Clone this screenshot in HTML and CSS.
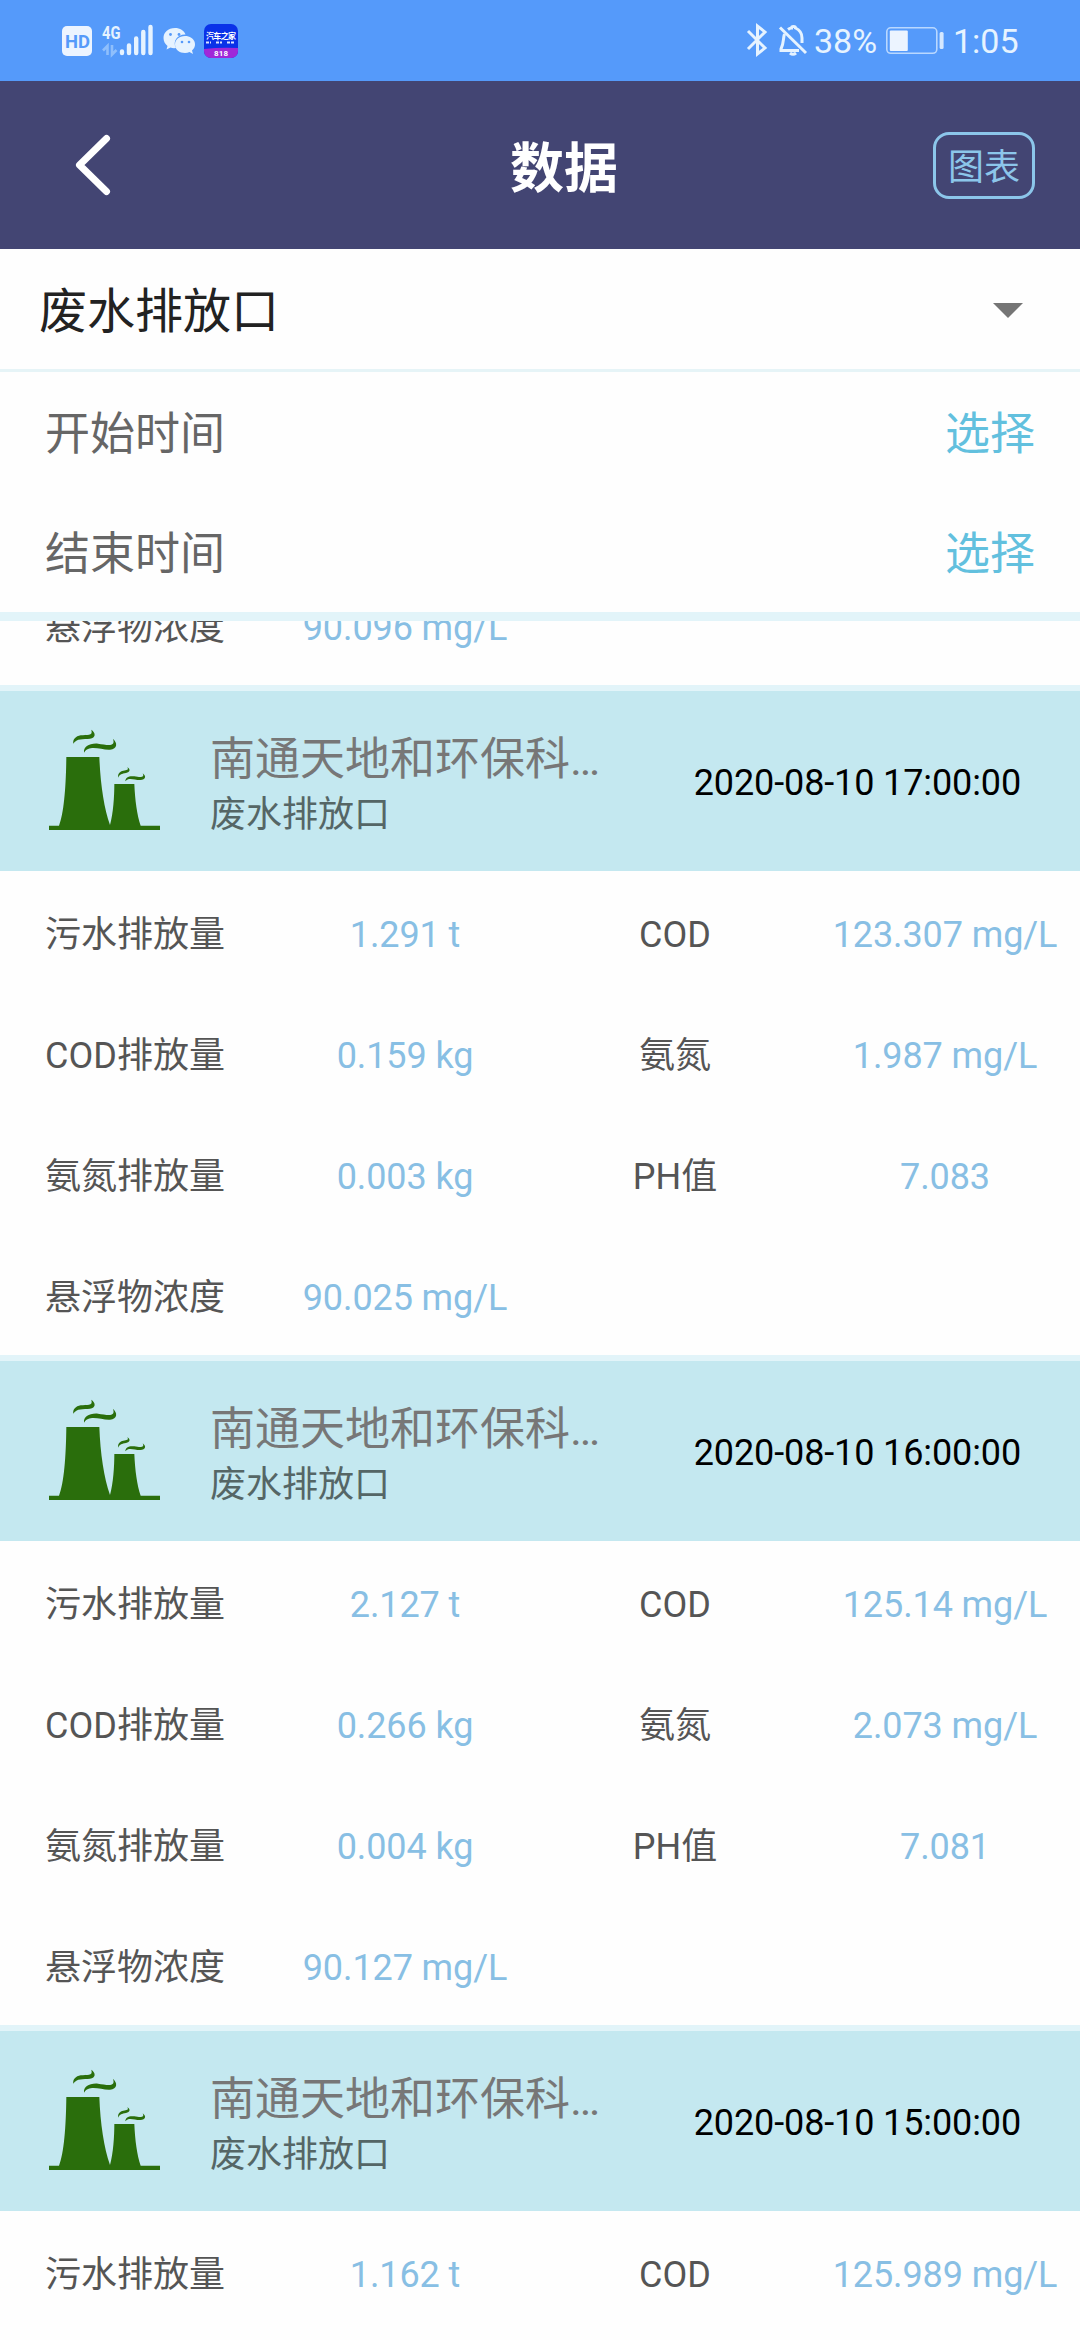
FILE: index.html
```html
<!DOCTYPE html>
<html lang="zh-CN">
<head>
<meta charset="utf-8">
<title>数据</title>
<link rel="stylesheet" href="styles.css">
</head>
<body>
<svg width="0" height="0" class="defs">
  <symbol id="plant" viewBox="54 144 339 309">
    <path fill="#2a6e0c" d="M57 437H87C102 400 108 320 109 231H208C211 310 222 385 240 435C250 400 253 350 253 312H313C315 360 321 405 332 437H390V450H57Z"/>
    <g fill="#2a6e0c">
      <path d="M130 191C128 178 137 169 152 166C170 163 190 170 184 149C198 159 198 173 180 176C160 178 140 174 130 191Z"/>
      <path d="M162 218C160 200 178 189 204 191C230 194 258 203 249 176C263 189 263 206 240 209C215 211 178 192 162 218Z"/>
      <path d="M265 293C262 281 270 274 280 272C290 270 297 271 292 261C302 268 301 276 288 279C276 281 268 283 265 293Z"/>
      <path d="M286 304C286 292 297 287 313 289C330 292 345 294 338 280C350 289 347 299 331 300C315 301 296 290 286 304Z"/>
    </g>
  </symbol>
</svg>
<div class="screen">
  <div class="status">
    <svg class="status-left" width="180" height="40" viewBox="60 21 180 40">
      <rect x="62" y="26" width="30" height="30" rx="5" fill="#ecf4ff"/>
      <text x="65" y="47.5" class="hd" textLength="25" lengthAdjust="spacingAndGlyphs">HD</text>
      <text x="102" y="39" class="net" textLength="18.500" lengthAdjust="spacingAndGlyphs">4G</text>
      <path d="M103 50.500L107.500 46V55M116.500 50L112 54.500V45" fill="none" stroke="#8fbffc" stroke-width="2.600"/>
      <g stroke="#e6f3ff" stroke-width="4.400" stroke-linecap="round">
        <path d="M122 51.500V53M129 45.500V53M136.200 38.500V53M143.300 32V53M150.500 27V53"/>
      </g>
      <g fill="#e6f3ff">
        <path d="M175 28C168 28 163.500 32.500 163.500 38C163.500 41 165 44 167.500 46L166.500 49.500L170.500 47.500Q173 48.500 176 48C172 41 178 34 185.500 34.500C184 30.500 180 28 175 28Z"/>
        <path d="M185 36C179 36 175 40 175 44.500C175 49.500 179.500 53 185 53Q187.500 53 189.500 52L193 54L192 50.500C198 46 195 36 185 36Z"/>
      </g>
      <g fill="#559afa"><circle cx="170.500" cy="34.500" r="1.400"/><circle cx="179" cy="34.500" r="1.400"/><circle cx="182" cy="42" r="1.300"/><circle cx="189" cy="42" r="1.300"/></g>
      <rect x="204" y="24" width="34" height="34" rx="7" fill="#0a32e8"/>
      <path d="M204 49Q221 47 238 48V51A7 7 0 0 1 231 58H211A7 7 0 0 1 204 51Z" fill="#a028d8"/>
      <text x="206" y="39" class="app-name" textLength="30">汽车之家</text>
      <path d="M206 42.500H211M216 42.500H222M227 42.500H234" stroke="#dce6ff" stroke-width="2" stroke-dasharray="3 1"/>
      <text x="214" y="56" class="app-num" textLength="14">818</text>
    </svg>
    <div class="status-right">
      <svg width="64" height="40" viewBox="745 21 64 40" fill="none" stroke="#e6f3ff" stroke-width="3">
        <path d="M748 31L765 48L757.500 54V26L765 32L748 49"/>
        <path d="M780 27.500L806 53" />
        <path d="M784.500 34C783 38 784 43 781 49V50.500H799M788 29.500Q790 28 791.500 28Q791.500 26.500 793.500 26.500Q795.500 26.500 795.500 28C800 30 802 33 802 38V43"/>
        <path d="M790 53Q793 55.500 796 53" />
      </svg>
      <span class="pct">38%</span>
      <svg class="battery" width="60" height="40" viewBox="885 21 60 40">
        <rect x="886.800" y="27.800" width="50" height="25.500" rx="4" fill="none" stroke="#b9d8ff" stroke-width="1.600"/>
        <rect x="889.800" y="30.500" width="18" height="20.500" rx="1" fill="#ecf4ff"/>
        <rect x="939.600" y="32" width="4" height="17" rx="1.500" fill="#d5e8ff"/>
      </svg>
      <span class="clock">1:05</span>
    </div>
  </div>

  <div class="header">
    <div class="back"><svg width="36" height="64" viewBox="0 0 36 64"><path d="M31.500 5.500L4.500 32L31.500 58.500" fill="none" stroke="#fff" stroke-width="7" stroke-linecap="round" stroke-linejoin="round"/></svg></div>
    <div class="title">数据</div>
    <div class="chart-btn">图表</div>
  </div>

  <div class="select"><span class="select-text">废水排放口</span><svg class="caret" width="30" height="15" viewBox="0 0 30 15"><path d="M0 0H30L15 15Z" fill="#757575"/></svg></div>
  <div class="pick"><span>开始时间</span><span class="pick-action">选择</span></div>
  <div class="pick"><span>结束时间</span><span class="pick-action">选择</span></div>

  <div class="list">
    <div class="grid scrolled">
      <div class="label">悬浮物浓度</div><div class="value">90.096 mg/L</div>
    </div>

    <div class="record">
      <svg class="plant" width="113" height="103"><use href="#plant"/></svg>
      <div class="info"><div class="company">南通天地和环保科…</div><div class="outlet">废水排放口</div></div>
      <div class="time">2020-08-10 17:00:00</div>
    </div>
    <div class="grid">
      <div class="label">污水排放量</div><div class="value">1.291 t</div><div class="label">COD</div><div class="value">123.307 mg/L</div>
      <div class="label">COD排放量</div><div class="value">0.159 kg</div><div class="label">氨氮</div><div class="value">1.987 mg/L</div>
      <div class="label">氨氮排放量</div><div class="value">0.003 kg</div><div class="label">PH值</div><div class="value">7.083</div>
      <div class="label">悬浮物浓度</div><div class="value">90.025 mg/L</div>
    </div>

    <div class="record">
      <svg class="plant" width="113" height="103"><use href="#plant"/></svg>
      <div class="info"><div class="company">南通天地和环保科…</div><div class="outlet">废水排放口</div></div>
      <div class="time">2020-08-10 16:00:00</div>
    </div>
    <div class="grid">
      <div class="label">污水排放量</div><div class="value">2.127 t</div><div class="label">COD</div><div class="value">125.14 mg/L</div>
      <div class="label">COD排放量</div><div class="value">0.266 kg</div><div class="label">氨氮</div><div class="value">2.073 mg/L</div>
      <div class="label">氨氮排放量</div><div class="value">0.004 kg</div><div class="label">PH值</div><div class="value">7.081</div>
      <div class="label">悬浮物浓度</div><div class="value">90.127 mg/L</div>
    </div>

    <div class="record">
      <svg class="plant" width="113" height="103"><use href="#plant"/></svg>
      <div class="info"><div class="company">南通天地和环保科…</div><div class="outlet">废水排放口</div></div>
      <div class="time">2020-08-10 15:00:00</div>
    </div>
    <div class="grid">
      <div class="label">污水排放量</div><div class="value">1.162 t</div><div class="label">COD</div><div class="value">125.989 mg/L</div>
    </div>
  </div>
</div>
</body>
</html>
```
FILE: styles.css
```css
* { box-sizing: border-box; }
body {
  margin: 0;
  font-family: Roboto, "Noto Sans CJK SC", sans-serif;
  font-size: 36px;
  color: #555;
  background: #fefefe;
}
svg { display: block; flex: none; }
.defs { position: absolute; }
.screen {
  width: 1080px;
  height: 2340px;
  overflow: hidden;
  display: flex;
  flex-direction: column;
}
.screen > * { flex: none; }

.status {
  height: 81px;
  padding: 0 61px 0 60px;
  background: #559afa;
  color: #e6f3ff;
  display: flex;
  align-items: center;
  justify-content: space-between;
  font-size: 34px;
}
.status-right { display: flex; align-items: center; line-height: 40px; }
.pct { width: 76px; padding-left: 5px; }
.clock { width: 74px; padding-left: 8px; }
.hd { font: bold 19px Roboto, sans-serif; fill: #559afa; }
.net { font: bold 19px Roboto, sans-serif; fill: #e6f3ff; }
.app-name { font: bold 8px "Noto Sans CJK SC", sans-serif; fill: #fff; }
.app-num { font: bold 8px Roboto, sans-serif; fill: #fff; }

.header {
  height: 168px;
  padding-right: 45px;
  background: #434573;
  display: flex;
  align-items: center;
}
.back { width: 195px; padding-left: 75px; }
.title {
  flex: 1;
  padding-bottom: 2px;
  text-align: center;
  color: #fff;
  font-size: 54px;
  font-weight: bold;
}
.chart-btn {
  width: 102px;
  height: 67px;
  border: 3px solid #8cc6ea;
  border-radius: 16px;
  color: #8cc6ea;
  text-align: center;
  line-height: 66px;
}

.select {
  height: 123px;
  padding: 0 57px 0 39px;
  border-bottom: 3px solid #e6f4f7;
  display: flex;
  align-items: center;
  justify-content: space-between;
  font-size: 48px;
  color: #222;
}
.select-text { padding-bottom: 4px; }
.caret { margin-top: 3px; }
.pick {
  height: 120px;
  padding: 0 45px 3px;
  display: flex;
  align-items: center;
  justify-content: space-between;
  font-size: 45px;
  color: #666;
}
.pick-action { color: #62c0de; }

.list {
  height: 1728px;
  border-top: 9px solid #e2f4f9;
  overflow: hidden;
}
.grid {
  display: grid;
  grid-template-columns: repeat(4, 270px);
  grid-auto-rows: 121px;
  text-align: center;
  line-height: 114px;
  white-space: nowrap;
}
.scrolled { margin-top: -57px; }
.label { padding-top: 7px; color: #555; }
.value { padding-top: 7px; color: #88bfe4; letter-spacing: -0.1px; }

.record {
  height: 186px;
  border-top: 6px solid #e2f4f9;
  background: #c4e8f0;
  padding: 0 59px 0 48px;
  display: flex;
  align-items: center;
}
.plant { margin-bottom: 4px; }
.info { flex: 1; margin-left: 49px; padding-top: 7px; }
.company { font-size: 45px; line-height: 60px; color: #777; }
.outlet { line-height: 50px; color: #566; }
.time { padding-top: 4px; color: #000; letter-spacing: -0.12px; }
```
